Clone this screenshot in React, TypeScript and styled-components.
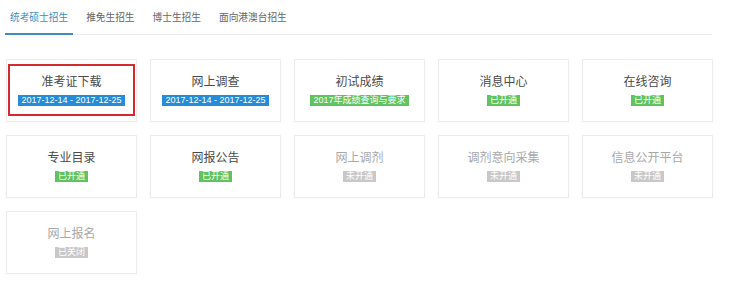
import React from 'react';
import styled, { createGlobalStyle } from 'styled-components';

const GlobalStyle = createGlobalStyle`
  body {
    margin: 0;
    background: #ffffff;
    font-family: "Liberation Sans", "Noto Sans CJK SC", sans-serif;
  }
`;

const Page = styled.div`
  width: 742px;
  height: 303px;
  padding-left: 5px;
  box-sizing: border-box;
`;

const TabBar = styled.nav`
  width: 707px;
  height: 35px;
  display: flex;
  gap: 8px;
  border-bottom: 1px solid #ebebeb;
  box-sizing: border-box;
`;

const Tab = styled.div<{ $active?: boolean }>`
  height: 35px;
  padding: 0 5px;
  display: flex;
  align-items: center;
  box-sizing: border-box;
  font-size: 9.7px;
  color: ${(p) => (p.$active ? '#3b8cc0' : '#666')};
  border-bottom: 2px solid ${(p) => (p.$active ? '#3f8db8' : 'transparent')};
  margin-bottom: -1px;
  padding-top: 1px;
`;

const Grid = styled.section`
  margin: 24px 0 0 1px;
  display: grid;
  grid-template-columns: repeat(5, 131px);
  grid-auto-rows: 63px;
  column-gap: 13px;
  row-gap: 13px;
`;

const Card = styled.div`
  position: relative;
  border: 1px solid #ececec;
  box-shadow: 0 1px 2px rgba(0, 0, 0, 0.03);
  background: #fff;
  display: flex;
  flex-direction: column;
  align-items: center;
  padding-top: 14px;
  box-sizing: border-box;
`;

const Title = styled.div<{ $off?: boolean }>`
  font-size: 12px;
  line-height: 16px;
  color: ${(p) => (p.$off ? '#a8a8a8' : '#4a4a4a')};
`;

const Badge = styled.span<{ $tone: 'blue' | 'green' | 'gray' }>`
  margin-top: 5px;
  height: 11px;
  line-height: 11px;
  padding: 0 3px;
  font-size: 9px;
  color: #fff;
  white-space: nowrap;
  background: ${(p) =>
    p.$tone === 'blue' ? '#248cd8' : p.$tone === 'green' ? '#5fc35f' : '#c8c8c8'};
`;

const Highlight = styled.div`
  position: absolute;
  left: 1px;
  top: 4px;
  right: 1px;
  bottom: 5px;
  border: 2px solid #d32a2e;
  pointer-events: none;
`;

type Item = {
  title: string;
  badge: string;
  tone: 'blue' | 'green' | 'gray';
  marked?: boolean;
};

const tabs = ['统考硕士招生', '推免生招生', '博士生招生', '面向港澳台招生'];

const items: Item[] = [
  { title: '准考证下载', badge: '2017-12-14 - 2017-12-25', tone: 'blue', marked: true },
  { title: '网上调查', badge: '2017-12-14 - 2017-12-25', tone: 'blue' },
  { title: '初试成绩', badge: '2017年成绩查询与要求', tone: 'green' },
  { title: '消息中心', badge: '已开通', tone: 'green' },
  { title: '在线咨询', badge: '已开通', tone: 'green' },
  { title: '专业目录', badge: '已开通', tone: 'green' },
  { title: '网报公告', badge: '已开通', tone: 'green' },
  { title: '网上调剂', badge: '未开通', tone: 'gray' },
  { title: '调剂意向采集', badge: '未开通', tone: 'gray' },
  { title: '信息公开平台', badge: '未开通', tone: 'gray' },
  { title: '网上报名', badge: '已关闭', tone: 'gray' },
];

export default function App() {
  return (
    <Page>
      <GlobalStyle />
      <TabBar>
        {tabs.map((t, i) => (
          <Tab key={t} $active={i === 0}>
            {t}
          </Tab>
        ))}
      </TabBar>
      <Grid>
        {items.map((it) => (
          <Card key={it.title}>
            <Title $off={it.tone === 'gray'}>{it.title}</Title>
            <Badge $tone={it.tone}>{it.badge}</Badge>
            {it.marked && <Highlight />}
          </Card>
        ))}
      </Grid>
    </Page>
  );
}
